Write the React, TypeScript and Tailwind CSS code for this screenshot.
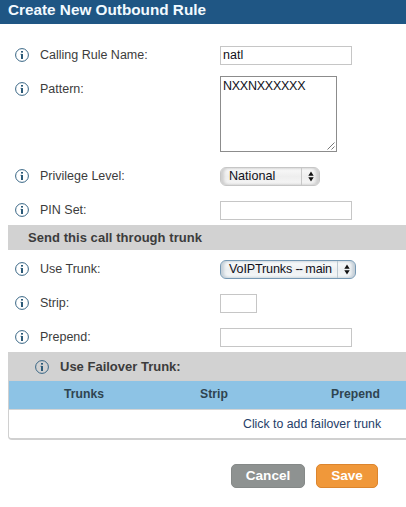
import { useState } from 'react';
import type { ReactNode } from 'react';

const InfoIcon = () => (
  <svg className="w-[14px] h-[14px] shrink-0 mt-[-1px]" viewBox="0 0 14 14" fill="none">
    <circle cx="7" cy="7" r="6.4" stroke="#376584" strokeWidth="1" />
    <rect x="6" y="3" width="2" height="1.6" fill="#2c5a78" />
    <rect x="6" y="6" width="2" height="5" fill="#2c5a78" />
    <path d="M5.3 6.3H7" stroke="#2c5a78" strokeWidth="0.6" />
  </svg>
);

function Row({ label, children }: { label: string; children: ReactNode }) {
  return (
    <div className="flex items-start h-[34px]">
      <div className="flex items-center w-[205px] h-[19px] shrink-0">
        <InfoIcon />
        <span className="ml-[11px] text-[12.5px] leading-[19px] whitespace-nowrap">{label}</span>
      </div>
      {children}
    </div>
  );
}

function Select({ value, className, arrowClass }: { value: ReactNode; className: string; arrowClass: string }) {
  return (
    <button
      type="button"
      className={`flex h-[19px] shrink-0 rounded-[6px] border text-left text-[12.6px] leading-[17px] text-[#101020] ${className}`}
    >
      <span className="flex-1 pl-2 whitespace-nowrap">{value}</span>
      <span className={`flex items-center justify-center w-[18px] h-full border-l ${arrowClass}`}>
        <svg className="w-[6px] h-[11px]" viewBox="0 0 6 11" fill="#111">
          <path d="M3 0.5 5.7 4.7H0.3ZM3 10.5 5.7 6.3H0.3Z" />
        </svg>
      </span>
    </button>
  );
}

const inputClass = 'block h-[19px] shrink-0 border border-[#c6c6c6] bg-white px-[2px] pb-[2px] text-[12.5px] text-[#101020] outline-none';

export default function App() {
  const [rule, setRule] = useState({
    name: 'natl',
    pattern: 'NXXNXXXXXX',
    pin: '',
    strip: '',
    prepend: '',
  });

  const handleChange = (e: { target: { name: string; value: string } }) => {
    const { name, value } = e.target;
    setRule(prev => ({ ...prev, [name]: value }));
  };

  return (
    <main className="w-[406px] h-[507px] overflow-hidden bg-white text-[#3c3c3c] font-['Liberation_Sans',Arial,sans-serif]">
      <h1 className="h-6 bg-[#1f5684] pl-2 text-[15.3px] leading-[19px] font-bold text-[#f2faff] whitespace-nowrap">
        Create New Outbound Rule
      </h1>

      <form className="pl-2">
        <div className="pl-[7px] pt-[22px] h-[201px]">
          <Row label="Calling Rule Name:">
            <input name="name" value={rule.name} onChange={handleChange} className={`${inputClass} w-[132px]`} />
          </Row>

          {/* Pattern */}
          <div className="flex items-start h-[87px]">
            <div className="flex items-center w-[205px] h-[19px] shrink-0">
              <InfoIcon />
              <span className="ml-[11px] text-[12.5px] leading-[19px]">Pattern:</span>
            </div>
            <div className="relative mt-[-4px] h-[76px] w-[117px]">
              <textarea
                name="pattern"
                value={rule.pattern}
                onChange={handleChange}
                className="block w-full h-full resize-none overflow-hidden border border-[#8c8c8c] bg-white px-[2px] py-[2px] text-[12.5px] leading-[15px] tracking-[-0.25px] text-[#101020] outline-none"
              />
              <svg className="absolute right-[2px] bottom-[2px] w-[8px] h-[8px]" viewBox="0 0 8 8" stroke="#777" fill="none">
                <path d="M0.5 7.5 7.5 0.5M4.5 7.5 7.5 4.5" />
              </svg>
            </div>
          </div>

          <Row label="Privilege Level:">
            <Select
              value="National"
              className="w-[100px] border-[#c6c6c6] bg-linear-to-b from-[#fafafa] via-[#eeeeee] to-[#f6f6f6] shadow-[inset_3px_0_3px_#cfcfcf,inset_-3px_0_3px_#cfcfcf]"
              arrowClass="border-[#c8c8c8]"
            />
          </Row>
          <Row label="PIN Set:">
            <input name="pin" value={rule.pin} onChange={handleChange} className={`${inputClass} w-[132px]`} />
          </Row>
        </div>

        <h2 className="h-[25px] bg-[#d2d2d2] pl-5 text-[13px] leading-[25px] tracking-[0.05px] font-bold">Send this call through trunk</h2>

        <div className="pl-[7px] pt-[10px] h-[102px]">
          <Row label="Use Trunk:">
            <Select
              value={<>VoIPTrunks <span className="tracking-[-0.9px]">--</span> main</>}
              className="w-[136px] border-[#7699b4] bg-linear-to-b from-[#fafbfc] via-[#edf0f2] to-[#f6f8f9] shadow-[inset_3px_0_3px_#c6d0d8,inset_-3px_0_3px_#c6d0d8] tracking-[-0.16px]"
              arrowClass="border-[#bcc8d0]"
            />
          </Row>
          <Row label="Strip:">
            <input name="strip" value={rule.strip} onChange={handleChange} className={`${inputClass} w-[37px]`} />
          </Row>
          <Row label="Prepend:">
            <input name="prepend" value={rule.prepend} onChange={handleChange} className={`${inputClass} w-[132px]`} />
          </Row>
        </div>

        {/* Failover trunks */}
        <div className="flex items-center h-[28px] bg-[#d2d2d2] pl-[27px] pt-[2px]">
          <InfoIcon />
          <h2 className="ml-[11px] text-[13px] font-bold">Use Failover Trunk:</h2>
        </div>
        <div className="h-[60px] overflow-hidden rounded-bl-[4px] border-l border-b-2 border-t border-[#d0d0d0]">
          <div className="flex h-[28px] bg-[#8dc3e5] text-[12.2px] leading-[27px] font-bold text-[#2f4450]">
            <span className="w-[150px] shrink-0 text-center">Trunks</span>
            <span className="w-[110px] shrink-0 text-center">Strip</span>
            <span className="w-[173px] shrink-0 text-center">Prepend</span>
          </div>
          <div className="h-[29px] border-t border-[#d5d5d5] pl-[234px] text-[12.3px] leading-[28px] text-[#263e69] whitespace-nowrap">
            Click to add failover trunk
          </div>
        </div>

        <div className="flex gap-[11px] pt-6 pl-[223px]">
          <button type="button" className="w-[74px] h-6 rounded-[5px] border border-[#858988] bg-[#8e9291] text-[13.6px] leading-[22px] font-bold text-white">
            Cancel
          </button>
          <button type="button" className="w-[62px] h-6 rounded-[5px] border border-[#dc852e] bg-[#f0983a] text-[13.6px] leading-[22px] font-bold text-white">
            Save
          </button>
        </div>
      </form>
    </main>
  );
}
